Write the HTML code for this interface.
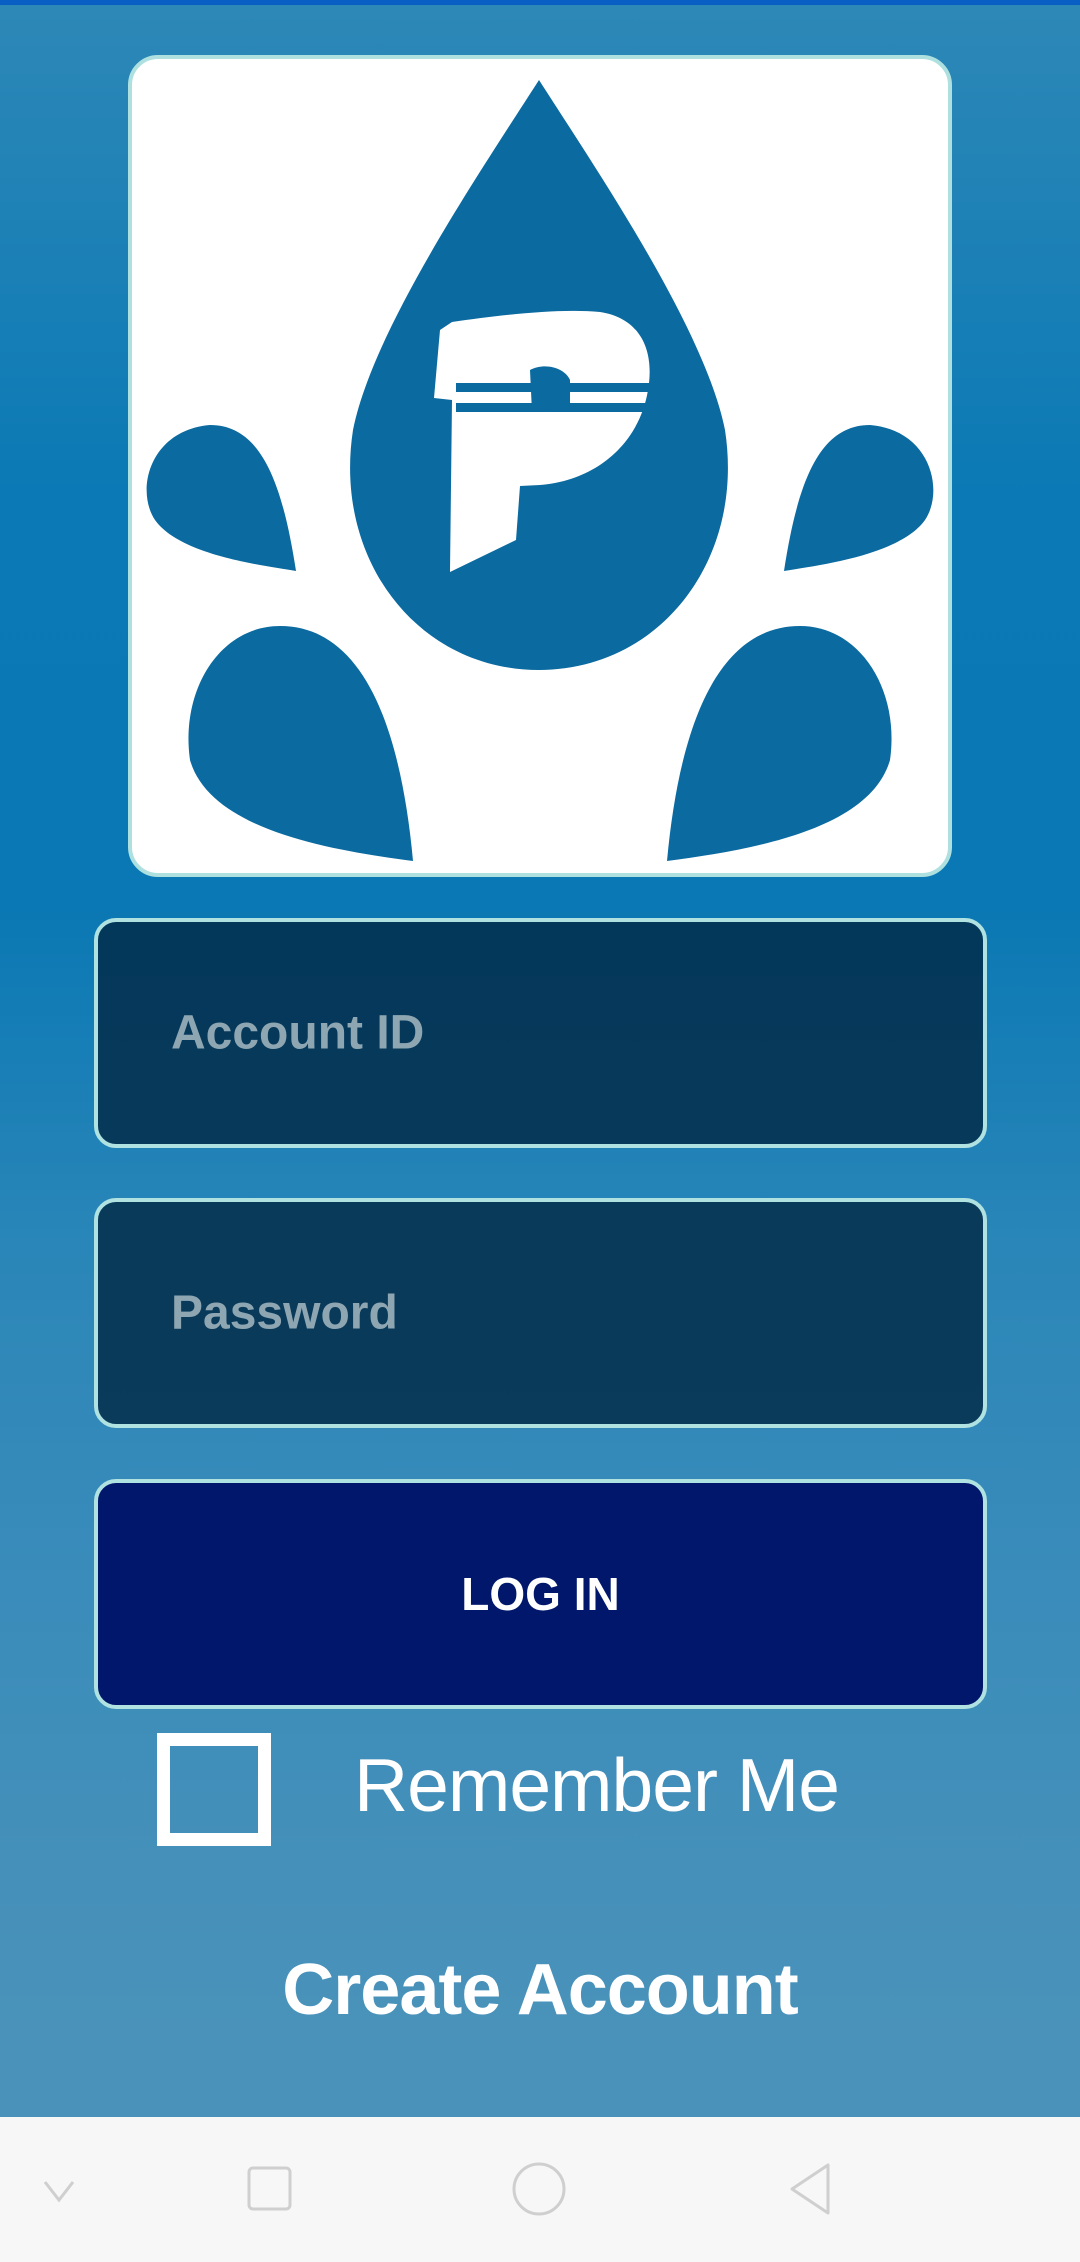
<!DOCTYPE html>
<html><head><meta charset="utf-8"><style>
html,body{margin:0;padding:0}
body{width:1080px;height:2262px;position:relative;overflow:hidden;font-family:"Liberation Sans",sans-serif;
background:linear-gradient(180deg,#2e88b7 0%,#0a79b5 22%,#0a78b4 40%,#2a86b8 55%,#3a8cba 70%,#4a92ba 90%,#4a92ba 100%);}
.top{position:absolute;left:0;top:0;width:1080px;height:5px;background:#0a5fc4}
.card{position:absolute;left:128px;top:55px;width:816px;height:814px;background:#fff;border:4px solid #aee0e0;border-radius:30px}
.inp{position:absolute;left:94px;width:893px;height:230px;border:4px solid #b0e2e2;border-radius:22px;background:rgba(3,42,70,.82);box-sizing:border-box}
.inp span{position:absolute;left:73px;top:50%;transform:translateY(-50%);font-size:48px;color:#8da6b2;font-weight:bold}
.btn{position:absolute;left:94px;top:1479px;width:893px;height:230px;border:4px solid #b0e2e2;border-radius:22px;background:#00176c;box-sizing:border-box;color:#fff;font-size:46px;font-weight:bold;text-align:center;line-height:222px}
.chk{position:absolute;left:157px;top:1733px;width:114px;height:113px;border:13px solid #fff;box-sizing:border-box}
.rem{position:absolute;left:354px;top:1740px;font-size:75px;color:#fff;line-height:90px;letter-spacing:-1px}
.ca{position:absolute;left:0;width:1080px;text-align:center;top:1945px;font-size:72px;font-weight:bold;color:#fff;line-height:90px;letter-spacing:-1px}
.nav{position:absolute;left:0;top:2117px;width:1080px;height:145px;background:#f7f7f7}
</style></head><body>
<div class="top"></div>
<div class="card"></div>
<svg style="position:absolute;left:0;top:0" width="1080" height="900" viewBox="0 0 1080 900">
<g fill="#0b6aa0">
<path d="M539,80 C600,175 705,330 725,430 C745,560 660,670 539,670 C418,670 333,560 353,430 C373,330 478,175 539,80Z"/>
<path d="M296,571 C260,565 180,555 155,520 C135,490 150,430 210,425 C260,425 282,480 296,571Z"/>
<path d="M784,571 C820,565 900,555 925,520 C945,490 930,430 870,425 C820,425 798,480 784,571Z"/>
<path d="M413,861 C330,850 210,830 190,760 C180,690 220,626 280,626 C360,626 400,720 413,861Z"/>
<path d="M667,861 C750,850 870,830 890,760 C900,690 860,626 800,626 C720,626 680,720 667,861Z"/>
</g>
<path fill="#fff" d="M452,322 C500,315 560,308 600,312 C640,318 655,350 648,390 C640,440 600,480 540,485 L520,486 L516,540 L450,572 L452,400 L434,398 L440,330 Z"/>
<g fill="#0b6aa0">
<rect x="456" y="383" width="196" height="9"/>
<rect x="456" y="403" width="196" height="9"/>
<path d="M530,370 C545,362 565,368 570,380 L570,405 L532,412Z"/>
</g>
</svg>
<div class="inp" style="top:918px"><span>Account ID</span></div>
<div class="inp" style="top:1198px"><span>Password</span></div>
<div class="btn">LOG IN</div>
<div class="chk"></div>
<div class="rem">Remember Me</div>
<div class="ca">Create Account</div>
<div class="nav">
<svg width="1080" height="145" viewBox="0 0 1080 145" style="position:absolute;left:0;top:0">
<g fill="none" stroke="#cfcfcf" stroke-width="3">
<path d="M45,65 L59,83 L73,65"/>
<rect x="249" y="51" width="41" height="41" rx="4"/>
<circle cx="539" cy="72" r="25"/>
<path d="M828,48 L828,96 L792,72 Z" stroke-linejoin="round"/>
</g>
</svg>
</div>
</body></html>
